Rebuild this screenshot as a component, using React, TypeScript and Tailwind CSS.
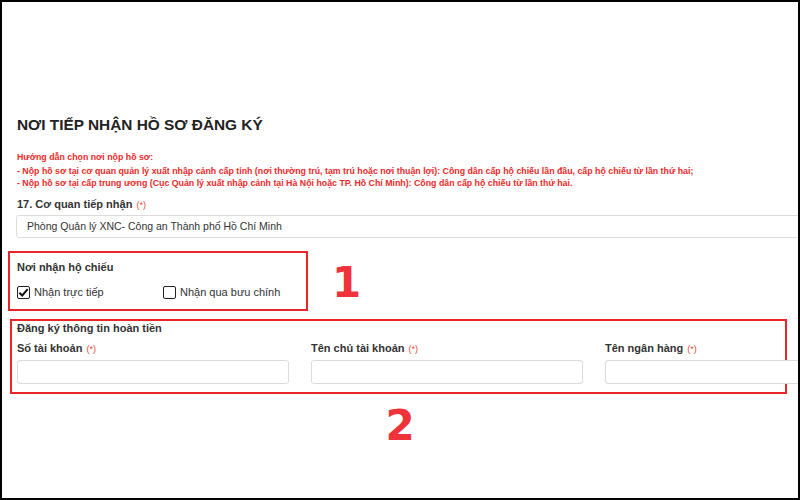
import React from 'react';

const req = <span className="ml-1 text-[9px] font-normal text-[#e8453c]">(*)</span>;

function Check({ checked, label }: { checked?: boolean; label: string }) {
  return (
    <label className="flex items-center gap-[4px] text-[11px] text-[#333]">
      <span className="w-[13px] h-[13px] border-[1.5px] border-[#222] rounded-[2px] bg-white flex items-center justify-center shrink-0">
        {checked && (
          <svg viewBox="0 0 12 12" className="w-[11px] h-[11px]">
            <path d="M1.5 6.2 L4.6 9.2 L10.6 2.4" fill="none" stroke="#111" strokeWidth="2.2" />
          </svg>
        )}
      </span>
      {label}
    </label>
  );
}

function Field({ label }: { label: string }) {
  return (
    <div className="w-[272px] shrink-0">
      <div className="h-[14px] leading-[14px] text-[11px] font-bold text-[#333]">
        {label}
        {req}
      </div>
      <div className="mt-[5px] h-[24px] border border-[#dcdcdc] rounded-[3px] bg-white" />
    </div>
  );
}

export default function App() {
  return (
    <div className="w-[800px] h-[500px] border-2 border-black bg-white overflow-hidden font-['Liberation_Sans',Arial,sans-serif]">
      <div className="pl-[15px] pt-[114px]">
        <h1 className="h-[18px] leading-[18px] text-[15.4px] font-bold text-[#222]">
          NƠI TIẾP NHẬN HỒ SƠ ĐĂNG KÝ
        </h1>

        <div className="mt-[17px] text-[8.8px] font-bold text-[#ee2a2a]">
          <div className="h-[12px] leading-[12px] mb-[2px]">Hướng dẫn chọn nơi nộp hồ sơ:</div>
          <div className="h-[12px] leading-[12px]">
            - Nộp hồ sơ tại cơ quan quản lý xuất nhập cảnh cấp tỉnh (nơi thường trú, tạm trú hoặc nơi thuận lợi): Công dân cấp hộ chiếu lần đầu, cấp hộ chiếu từ lần thứ hai;
          </div>
          <div className="h-[12px] leading-[12px]">
            - Nộp hồ sơ tại cấp trung ương (Cục Quản lý xuất nhập cảnh tại Hà Nội hoặc TP. Hồ Chí Minh): Công dân cấp hộ chiếu từ lần thứ hai.
          </div>
        </div>

        <div className="mt-[8px] h-[14px] leading-[14px] text-[11px] font-bold text-[#333]">
          17. Cơ quan tiếp nhận
          {req}
        </div>
        <div className="mt-[4px] -ml-[1px] h-[23px] w-[900px] border border-[#dcdcdc] rounded-[3px] flex items-center pl-[10px] text-[10.5px] text-[#333]">
          Phòng Quản lý XNC- Công an Thành phố Hồ Chí Minh
        </div>

        <div className="mt-[13px] flex items-start">
          <div className="-ml-[9px] w-[300px] h-[60px] border-2 border-[#e8262a] pl-[7px] pt-[7px]">
            <div className="h-[14px] leading-[14px] text-[11px] font-bold text-[#333]">Nơi nhận hộ chiếu</div>
            <div className="mt-[10px] flex">
              <div className="w-[146px]">
                <Check checked label="Nhận trực tiếp" />
              </div>
              <Check label="Nhận qua bưu chính" />
            </div>
          </div>
          <div className="ml-[24px] mt-[11px] leading-none text-[42px] font-bold text-[#f0333a] font-['DejaVu_Sans',sans-serif]">
            1
          </div>
        </div>

        <div className="mt-[8px] -ml-[7px] w-[777px] h-[75px] border-2 border-[#e8262a] pl-[5px]">
          <div className="h-[14px] leading-[14px] text-[11px] font-bold text-[#333]">Đăng ký thông tin hoàn tiền</div>
          <div className="mt-[6px] flex gap-[22px]">
            <Field label="Số tài khoản" />
            <Field label="Tên chủ tài khoản" />
            <Field label="Tên ngân hàng" />
          </div>
        </div>
      </div>

      <div className="mt-[11px] text-center leading-none text-[42px] font-bold text-[#f0333a] font-['DejaVu_Sans',sans-serif]">
        2
      </div>
    </div>
  );
}
